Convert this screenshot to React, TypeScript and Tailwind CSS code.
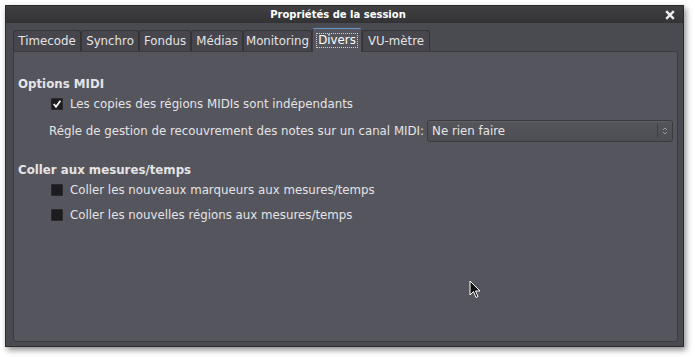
import React from "react";

const tabs: [string, number][] = [
  ["Timecode", 68],
  ["Synchro", 58],
  ["Fondus", 52],
  ["Médias", 52],
  ["Monitoring", 69],
  ["Divers", 50],
  ["VU-mètre", 68],
];

function Check({ checked }: { checked?: boolean }) {
  return (
    <span className="flex h-[12px] w-[12px] items-center justify-center rounded-[1px] border border-[#2a2a2c] bg-[#1c1c1e]">
      {checked && (
        <svg width="10" height="10" viewBox="0 0 10 10">
          <path d="M1.8 5 L4 7.8 L8.4 1.8" stroke="#f4f4f4" strokeWidth="1.9" fill="none" />
        </svg>
      )}
    </span>
  );
}

export default function App() {
  return (
    <div
      className="h-[357px] w-[695px] bg-white p-[5px] pr-[11px] pb-[10px] text-[11.8px] leading-[14px] text-[#e4e4e6]"
      style={{ fontFamily: '"DejaVu Sans", sans-serif' }}
    >
      <div className="relative flex h-full flex-col border border-[#2b2b2d] bg-[#47474d] shadow-[2px_3px_6px_rgba(0,0,0,0.45)]">
        {/* barre de titre */}
        <div className="relative flex h-[17px] items-center justify-center bg-gradient-to-b from-[#404043] to-[#333336] pr-[13px] text-[10px] font-bold text-white">
          Propriétés de la session
          <svg className="absolute right-[8px] top-[4px]" width="10" height="10" viewBox="0 0 10 10">
            <path d="M1.2 1.2 L8.8 8.8 M8.8 1.2 L1.2 8.8" stroke="#ececec" strokeWidth="2.4" />
          </svg>
        </div>

        <div className="flex flex-1 flex-col bg-[#4a4a51] pb-[4px] pl-[7px] pr-[5px] pt-[5px]">
          {/* onglets */}
          <div className="flex items-end">
            {tabs.map(([t, w]) => {
              const active = t === "Divers";
              return (
                <div
                  key={t}
                  style={{ width: w }}
                  className={
                    active
                      ? "relative -mb-px flex h-[24px] items-center justify-center rounded-t-[3px] border border-b-0 border-[#3a3a40] border-t-[#6b95cf] bg-[#55555d] pb-[1px] text-white"
                      : "flex h-[21px] items-center justify-center rounded-t-[3px] border border-b-0 border-[#333338] bg-[#46464c]"
                  }
                >
                  {active ? (
                    <span className="border border-dotted border-[#d0d0d0] px-[1px] leading-[13px]">{t}</span>
                  ) : (
                    t
                  )}
                </div>
              );
            })}
          </div>

          {/* panneau */}
          <div className="flex flex-1 flex-col rounded-b-[3px] rounded-tr-[3px] border border-[#3a3a40] bg-[#55555d] pl-[4px] pr-[4px] pt-[24px]">
            <div className="flex h-[16px] items-center font-bold">Options MIDI</div>
            <div className="mt-[4px] flex h-[16px] items-center gap-[7px] pl-[33px]">
              <Check checked />
              <span>Les copies des régions MIDIs sont indépendants</span>
            </div>
            <div className="mt-[8px] flex h-[22px] items-center pl-[31px]">
              <span className="mr-[3px]">Régle de gestion de recouvrement des notes sur un canal MIDI:</span>
              <div className="flex h-[22px] flex-1 items-center rounded-[3px] border border-[#3a3a3f] bg-gradient-to-b from-[#55555c] to-[#4d4d54] shadow-[inset_0_1px_0_rgba(255,255,255,0.06)]">
                <span className="flex-1 pl-[4px]">Ne rien faire</span>
                <span className="flex h-[14px] w-[15px] items-center justify-center border-l border-[#3e3e44]">
                  <svg width="6" height="10" viewBox="0 0 6 10">
                    <path d="M1 4 L3 2 L5 4 M1 6 L3 8 L5 6" stroke="#9a9aa0" fill="none" />
                  </svg>
                </span>
              </div>
            </div>

            <div className="mt-[20px] flex h-[16px] items-center font-bold">Coller aux mesures/temps</div>
            <div className="mt-[4px] flex h-[16px] items-center gap-[7px] pl-[33px]">
              <Check />
              <span>Coller les nouveaux marqueurs aux mesures/temps</span>
            </div>
            <div className="mt-[9px] flex h-[16px] items-center gap-[7px] pl-[33px]">
              <Check />
              <span>Coller les nouvelles régions aux mesures/temps</span>
            </div>
          </div>
        </div>

        {/* curseur */}
        <svg className="absolute left-[463px] top-[274px]" width="14" height="20" viewBox="0 0 14 20">
          <path d="M1 1 L1 15 L4.5 11.5 L7 17.5 L9 16.5 L6.5 11 L11 11 Z" fill="#111" stroke="#fff" strokeWidth="1" />
        </svg>
      </div>
    </div>
  );
}
